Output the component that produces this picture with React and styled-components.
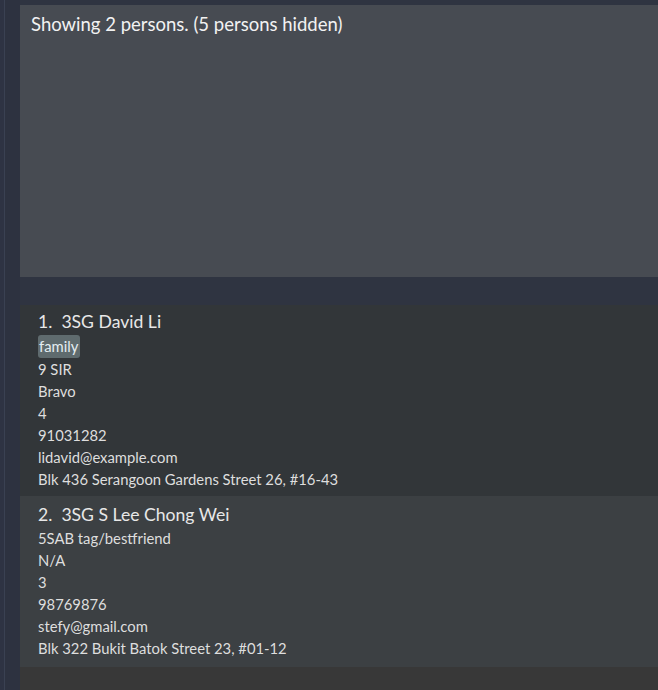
import React from 'react'
import styled, { createGlobalStyle } from 'styled-components'

const GlobalStyle = createGlobalStyle`
  html, body {
    margin: 0;
    padding: 0;
    background: #2f3441;
    font-family: "Lato", "Noto Sans", sans-serif;
  }
`

const Window = styled.div`
  display: flex;
  width: 658px;
  height: 690px;
  overflow: hidden;
  background: #2f3441;
`

const SideRail = styled.div`
  flex: 0 0 20px;
  display: flex;
`

const RailEdge = styled.div`
  width: 4px;
  background: #2e3343;
  border-right: 1px solid #3a4152;
`

const RailFill = styled.div`
  flex: 1;
  background: #2d3240;
`

const Main = styled.div`
  flex: 1;
  display: flex;
  flex-direction: column;
  padding-top: 5px;
`

const ResultBox = styled.div`
  height: 272px;
  background: #474b52;
  color: #f2f2f2;
  font-size: 18.5px;
  line-height: 24px;
  padding: 7px 11px;
  box-sizing: border-box;
`

const Gap = styled.div`
  height: 28px;
  background: #2f3441;
`

const List = styled.div`
  flex: 1;
  display: flex;
  flex-direction: column;
  background: #383838;
`

const Card = styled.div`
  background: ${p => (p.$odd ? '#3c4043' : '#323639')};
  padding: ${p => (p.$odd ? '8px 18px 8px' : '6px 18px 6px')};
  display: flex;
  flex-direction: column;
  color: #dedede;
`

const Name = styled.div`
  display: flex;
  font-size: 17.6px;
  color: #e8e8e8;
  line-height: 22px;
  margin-bottom: 1px;
`

const Index = styled.span`
  margin-right: 9px;
`

const Tags = styled.div`
  display: flex;
  gap: 4px;
  margin: 1px 0 0;
`

const Tag = styled.span`
  background: #5f6b6e;
  color: #e4eef2;
  font-size: 14.8px;
  line-height: 23px;
  padding: 0 2px 0 1px;
  border-radius: 3px;
`

const Field = styled.div`
  font-size: 14.8px;
  line-height: 22px;
`

const persons = [
  {
    name: '3SG David Li',
    tags: ['family'],
    fields: ['9 SIR', 'Bravo', '4', '91031282', 'lidavid@example.com', 'Blk 436 Serangoon Gardens Street 26, #16-43'],
  },
  {
    name: '3SG S Lee Chong Wei',
    tags: [],
    fields: ['5SAB tag/bestfriend', 'N/A', '3', '98769876', 'stefy@gmail.com', 'Blk 322 Bukit Batok Street 23, #01-12'],
  },
]

const App = () => (
  <Window>
    <GlobalStyle />
    <SideRail>
      <RailEdge />
      <RailFill />
    </SideRail>
    <Main>
      <ResultBox>Showing 2 persons. (5 persons hidden)</ResultBox>
      <Gap />
      <List>
        {persons.map((p, i) => (
          <Card key={p.name} $odd={i % 2 === 1}>
            <Name>
              <Index>{i + 1}.</Index>
              {p.name}
            </Name>
            {p.tags.length > 0 && (
              <Tags>
                {p.tags.map(t => <Tag key={t}>{t}</Tag>)}
              </Tags>
            )}
            {p.fields.map((f, j) => <Field key={j}>{f}</Field>)}
          </Card>
        ))}
      </List>
    </Main>
  </Window>
)

export default App
